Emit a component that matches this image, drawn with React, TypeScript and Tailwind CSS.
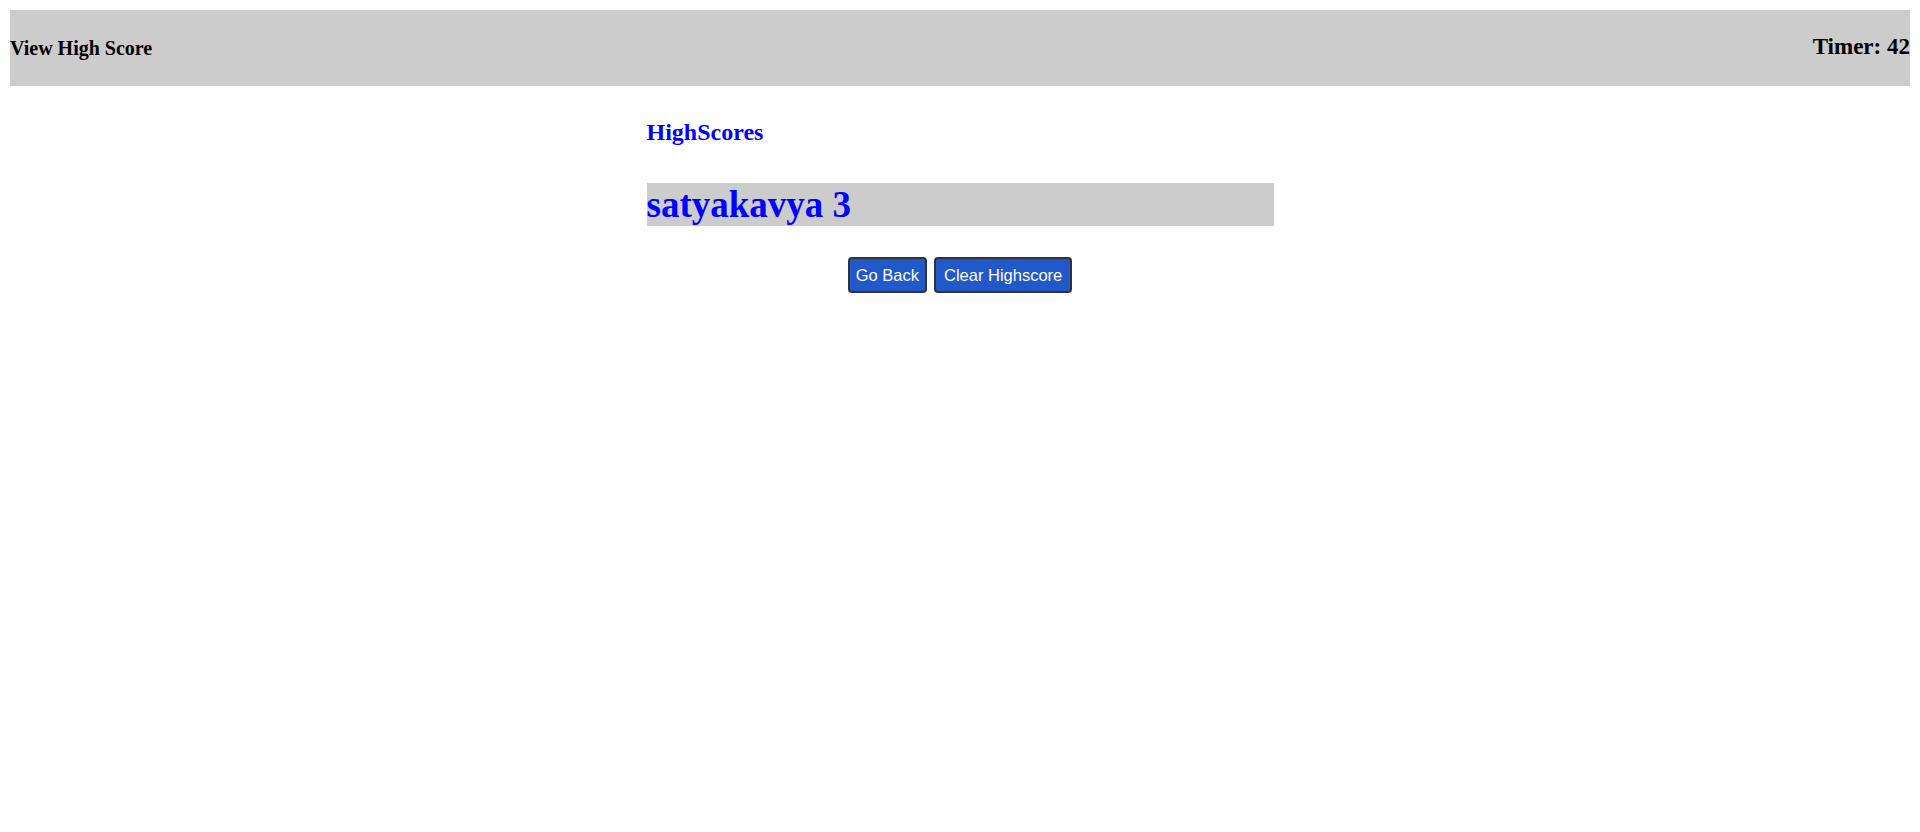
import React from 'react';

const scores = [{ name: 'satyakavya', score: 3 }];

const App: React.FC = () => {
  return (
    <div className="min-h-screen bg-white p-[10px] font-['Liberation_Serif',serif]">
      <header className="flex h-[76px] items-center justify-between bg-[#cccccc]">
        <a className="text-[20px] font-bold text-black leading-normal">View High Score</a>
        <div className="mb-[2px] text-[23px] font-bold text-black leading-normal">Timer: 42</div>
      </header>

      <main className="mx-auto mt-[28px] w-[33%]">
        <h2 className="text-[24px] font-bold leading-normal text-[#0000ff]">HighScores</h2>
        <ul className="mt-[33px]">
          {scores.map((s) => (
            <li
              key={s.name}
              className="bg-[#cccccc] text-[37px] font-bold leading-[43px] text-[#0000ff]"
            >
              {s.name} {s.score}
            </li>
          ))}
        </ul>
      </main>

      <div className="mt-[31px] flex justify-center gap-[7px] font-['Liberation_Sans',sans-serif]">
        <button className="h-[36px] rounded-[4px] border-2 border-[#333333] bg-[#2159c9] px-[6px] text-[16.5px] text-white">
          Go Back
        </button>
        <button className="h-[36px] rounded-[4px] border-2 border-[#333333] bg-[#2159c9] px-[8px] text-[16.5px] text-white">
          Clear Highscore
        </button>
      </div>
    </div>
  );
};

export default App;
